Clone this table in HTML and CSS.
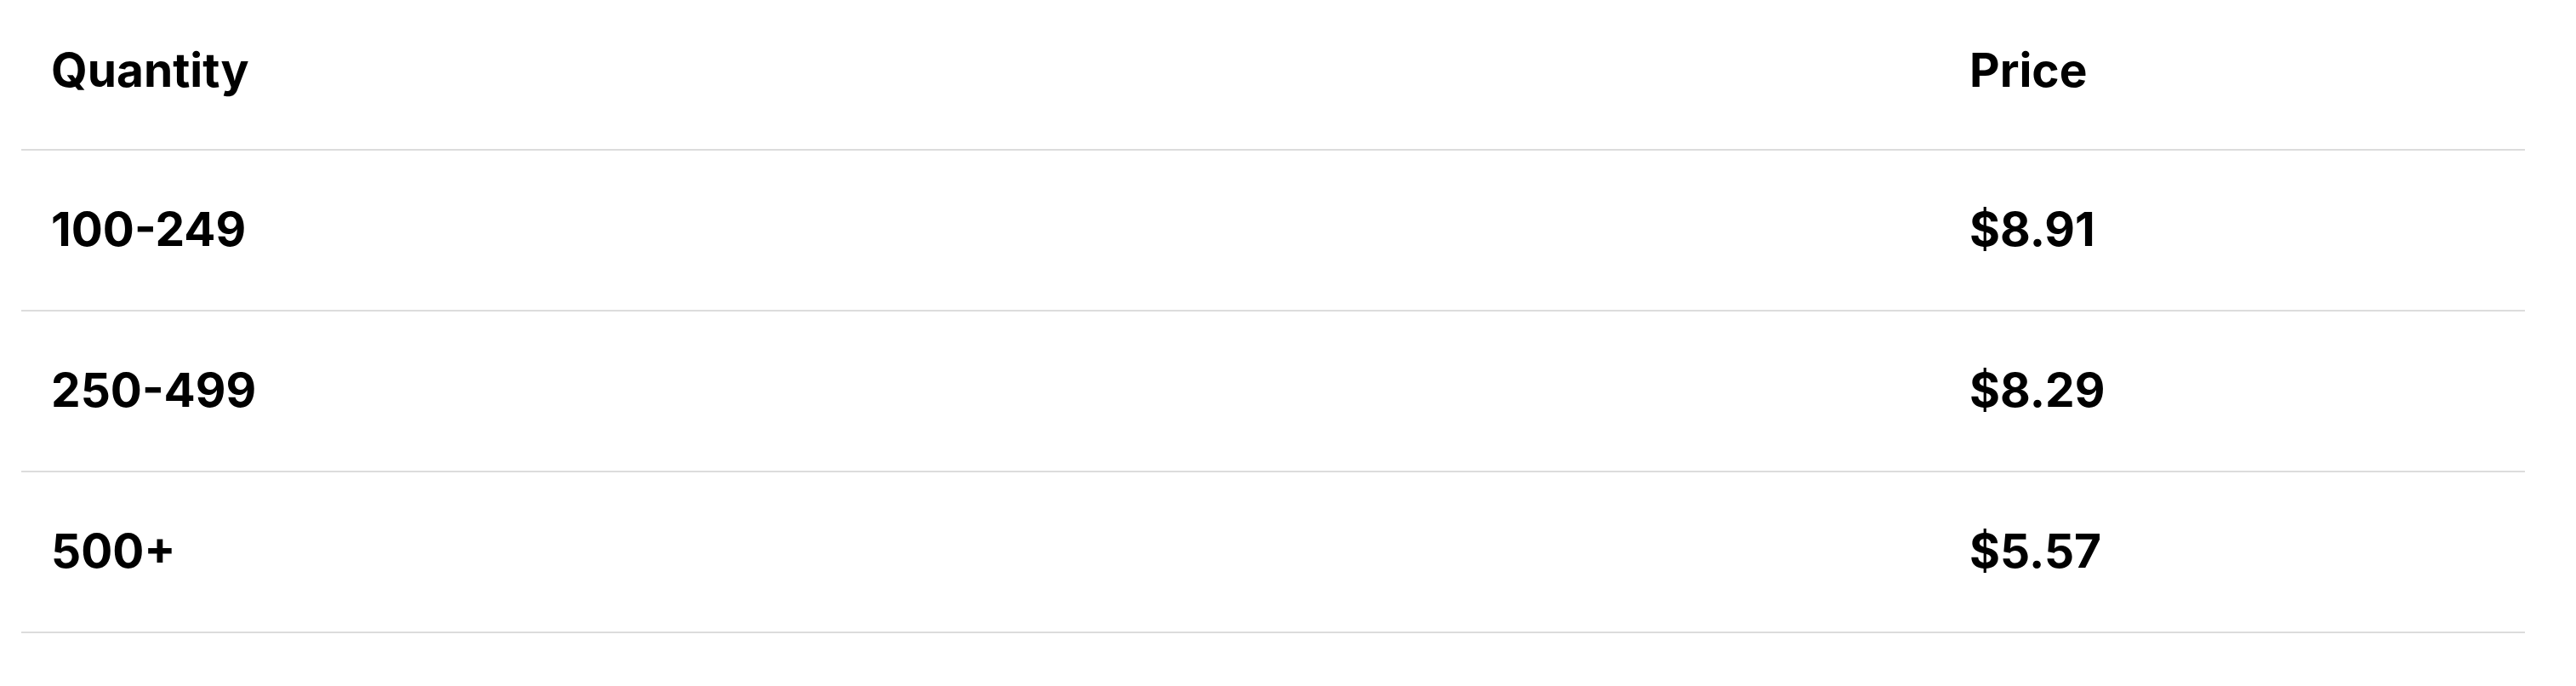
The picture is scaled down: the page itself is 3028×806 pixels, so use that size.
FILE: index.html
```html
<!DOCTYPE html>
<html lang="en">
<head>
<meta charset="utf-8">
<title>Pricing</title>
<link rel="stylesheet" href="styles.css">
</head>
<body>
<table class="price-table">
  <thead>
    <tr class="head-row">
      <th class="col-qty">Quantity</th>
      <th class="col-price">Price</th>
    </tr>
  </thead>
  <tbody>
    <tr class="data-row">
      <td class="col-qty">100-249</td>
      <td class="col-price">$8.91</td>
    </tr>
    <tr class="data-row">
      <td class="col-qty">250-499</td>
      <td class="col-price">$8.29</td>
    </tr>
    <tr class="data-row">
      <td class="col-qty">500+</td>
      <td class="col-price">$5.57</td>
    </tr>
  </tbody>
</table>
</body>
</html>
```
FILE: styles.css
```css
html, body {
  margin: 0;
  padding: 0;
  background: #ffffff;
}

body {
  padding: 0 60px 0 25px;
  font-family: "Inter", "Noto Sans", sans-serif;
  color: #000000;
}

.price-table {
  width: 100%;
  border-collapse: collapse;
  table-layout: fixed;
}

.price-table th,
.price-table td {
  text-align: left;
  font-weight: 700;
  font-size: 55px;
  line-height: 84px;
  padding: 0 0 0 35px;
  border-bottom: 2px solid #dcdcdc;
  white-space: nowrap;
}

.col-qty {
  width: 2220px;
}

.head-row th {
  padding-top: 40px;
  padding-bottom: 51px;
}

.data-row td {
  padding-top: 50px;
  padding-bottom: 53px;
}
```
